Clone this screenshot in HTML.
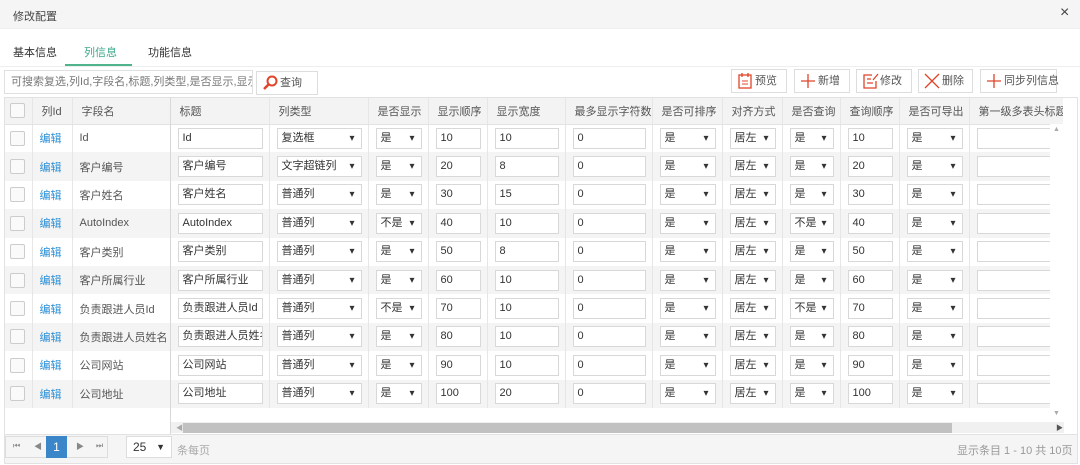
<!DOCTYPE html>
<html><head><meta charset="utf-8"><style>
*{box-sizing:border-box;margin:0;padding:0}
body{width:1080px;height:465px;overflow:hidden;background:#fff;font-family:"Liberation Sans","Noto Sans CJK SC",sans-serif;font-size:11px;color:#555;position:relative}
.abs{position:absolute;white-space:nowrap}
.title{left:0;top:0;width:1080px;height:29px;background:#f5f5f5;border-bottom:1px solid #eee}
.title span{position:absolute;left:13px;top:8px;color:#444}
.tab{top:44px;color:#333}
.btn{top:69px;height:24px;border:1px solid #ddd;background:#fff;color:#555;line-height:22px;padding-left:23px}
.btn svg{position:absolute;left:5px;top:3px}
table{border-collapse:collapse;table-layout:fixed}
td{height:28.4px;border-right:1px solid #e6e6e6;padding:0 6px 0 7px;white-space:nowrap;overflow:hidden;vertical-align:middle}
tr.h td{height:26px;background:#f3f3f3;border-bottom:1px solid #e2e2e2;color:#555;padding-left:9px}
tr:nth-child(odd):not(.h) td{background:#f4f4f4}
.in{display:block;height:21px;border:1px solid #d8d8d8;background:#fff;line-height:19px;padding-left:4px;color:#333;position:relative;overflow:hidden}
.sel:after{content:"▾";position:absolute;right:6px;top:0;font-size:10px;color:#333}
.cb{display:inline-block;width:15px;height:15px;border:1px solid #ccc;border-radius:2px;background:#fafafa;margin-left:2px;vertical-align:middle}
tr.h td:first-child{padding-left:7px}
.ed{color:#2b8fd6}
</style></head><body>
<div class="abs title"><span>修改配置</span><span style="left:1060px;top:4px;font-size:16px;color:#444">×</span></div>
<div class="abs tab" style="left:13px">基本信息</div>
<div class="abs tab" style="left:84px;color:#3ba88a">列信息</div>
<div class="abs tab" style="left:148px">功能信息</div>
<div class="abs" style="left:65px;top:64px;width:67px;height:2px;background:#4fb38c"></div>
<div class="abs" style="left:0;top:66px;width:1080px;height:1px;background:#eee"></div>
<div class="abs" style="left:4px;top:70px;width:249px;height:24px;border:1px solid #e0e0e0;color:#777;line-height:22px;padding-left:6px;overflow:hidden;white-space:nowrap;font-size:11px">可搜索复选,列Id,字段名,标题,列类型,是否显示,显示顺序,显</div>
<div class="abs btn" style="left:256px;width:62px;top:71px"><svg width="16" height="16"><circle cx="10" cy="6" r="4.5" fill="none" stroke="#e0452a" stroke-width="2"/><line x1="7" y1="9" x2="2" y2="14" stroke="#e0452a" stroke-width="2.5"/></svg>查询</div>
<div class="abs btn" style="left:731px;width:56px"><svg width="16" height="16"><rect x="2" y="2" width="12" height="13" fill="none" stroke="#e0452a" stroke-width="1.3"/><line x1="5" y1="0" x2="5" y2="4" stroke="#e0452a" stroke-width="1.3"/><line x1="11" y1="0" x2="11" y2="4" stroke="#e0452a" stroke-width="1.3"/><line x1="5" y1="8" x2="11" y2="8" stroke="#e0452a"/><line x1="5" y1="11" x2="11" y2="11" stroke="#e0452a"/></svg>预览</div>
<div class="abs btn" style="left:794px;width:56px"><svg width="16" height="16"><path d="M8 1V15M1 8H15" stroke="#e0452a" stroke-width="1.3"/></svg>新增</div>
<div class="abs btn" style="left:856px;width:56px"><svg width="18" height="16"><path d="M10 2H2V15H14V8M5 6H9M5 10H11M11 7L16 1" fill="none" stroke="#e0452a" stroke-width="1.3"/></svg>修改</div>
<div class="abs btn" style="left:918px;width:55px"><svg width="16" height="16"><path d="M1 1L15 15M15 1L1 15" stroke="#e0452a" stroke-width="1.3"/></svg>删除</div>
<div class="abs btn" style="left:980px;width:77px"><svg width="16" height="16"><path d="M8 1V15M1 8H15" stroke="#e0452a" stroke-width="1.3"/></svg>同步列信息</div>

<div class="abs" style="left:4px;top:97px;width:1074px;height:367px;border:1px solid #e2e2e2;overflow:hidden">
<table style="width:1095px;margin-left:-4px">
<colgroup><col style="width:31px"><col style="width:40px"><col style="width:98px"><col style="width:99px"><col style="width:99px"><col style="width:60px"><col style="width:59px"><col style="width:78px"><col style="width:87px"><col style="width:70px"><col style="width:60px"><col style="width:58px"><col style="width:59px"><col style="width:70px"><col style="width:127px"></colgroup>
<tr class="h"><td><span class="cb"></span></td><td>列Id</td><td>字段名</td><td>标题</td><td>列类型</td><td>是否显示</td><td>显示顺序</td><td>显示宽度</td><td>最多显示字符数</td><td>是否可排序</td><td>对齐方式</td><td>是否查询</td><td>查询顺序</td><td>是否可导出</td><td>第一级多表头标题</td></tr>
<tr><td><span class="cb"></span></td><td class="ed">编辑</td><td>Id</td><td><span class="in">Id</span></td><td><span class="in sel">复选框</span></td><td><span class="in sel">是</span></td><td><span class="in">10</span></td><td><span class="in">10</span></td><td><span class="in">0</span></td><td><span class="in sel">是</span></td><td><span class="in sel">居左</span></td><td><span class="in sel">是</span></td><td><span class="in">10</span></td><td><span class="in sel">是</span></td><td><span class="in" style="width:100px">&nbsp;</span></td></tr>
<tr><td><span class="cb"></span></td><td class="ed">编辑</td><td>客户编号</td><td><span class="in">客户编号</span></td><td><span class="in sel">文字超链列</span></td><td><span class="in sel">是</span></td><td><span class="in">20</span></td><td><span class="in">8</span></td><td><span class="in">0</span></td><td><span class="in sel">是</span></td><td><span class="in sel">居左</span></td><td><span class="in sel">是</span></td><td><span class="in">20</span></td><td><span class="in sel">是</span></td><td><span class="in" style="width:100px">&nbsp;</span></td></tr>
<tr><td><span class="cb"></span></td><td class="ed">编辑</td><td>客户姓名</td><td><span class="in">客户姓名</span></td><td><span class="in sel">普通列</span></td><td><span class="in sel">是</span></td><td><span class="in">30</span></td><td><span class="in">15</span></td><td><span class="in">0</span></td><td><span class="in sel">是</span></td><td><span class="in sel">居左</span></td><td><span class="in sel">是</span></td><td><span class="in">30</span></td><td><span class="in sel">是</span></td><td><span class="in" style="width:100px">&nbsp;</span></td></tr>
<tr><td><span class="cb"></span></td><td class="ed">编辑</td><td>AutoIndex</td><td><span class="in">AutoIndex</span></td><td><span class="in sel">普通列</span></td><td><span class="in sel">不是</span></td><td><span class="in">40</span></td><td><span class="in">10</span></td><td><span class="in">0</span></td><td><span class="in sel">是</span></td><td><span class="in sel">居左</span></td><td><span class="in sel">不是</span></td><td><span class="in">40</span></td><td><span class="in sel">是</span></td><td><span class="in" style="width:100px">&nbsp;</span></td></tr>
<tr><td><span class="cb"></span></td><td class="ed">编辑</td><td>客户类别</td><td><span class="in">客户类别</span></td><td><span class="in sel">普通列</span></td><td><span class="in sel">是</span></td><td><span class="in">50</span></td><td><span class="in">8</span></td><td><span class="in">0</span></td><td><span class="in sel">是</span></td><td><span class="in sel">居左</span></td><td><span class="in sel">是</span></td><td><span class="in">50</span></td><td><span class="in sel">是</span></td><td><span class="in" style="width:100px">&nbsp;</span></td></tr>
<tr><td><span class="cb"></span></td><td class="ed">编辑</td><td>客户所属行业</td><td><span class="in">客户所属行业</span></td><td><span class="in sel">普通列</span></td><td><span class="in sel">是</span></td><td><span class="in">60</span></td><td><span class="in">10</span></td><td><span class="in">0</span></td><td><span class="in sel">是</span></td><td><span class="in sel">居左</span></td><td><span class="in sel">是</span></td><td><span class="in">60</span></td><td><span class="in sel">是</span></td><td><span class="in" style="width:100px">&nbsp;</span></td></tr>
<tr><td><span class="cb"></span></td><td class="ed">编辑</td><td>负责跟进人员Id</td><td><span class="in">负责跟进人员Id</span></td><td><span class="in sel">普通列</span></td><td><span class="in sel">不是</span></td><td><span class="in">70</span></td><td><span class="in">10</span></td><td><span class="in">0</span></td><td><span class="in sel">是</span></td><td><span class="in sel">居左</span></td><td><span class="in sel">不是</span></td><td><span class="in">70</span></td><td><span class="in sel">是</span></td><td><span class="in" style="width:100px">&nbsp;</span></td></tr>
<tr><td><span class="cb"></span></td><td class="ed">编辑</td><td>负责跟进人员姓名</td><td><span class="in">负责跟进人员姓名</span></td><td><span class="in sel">普通列</span></td><td><span class="in sel">是</span></td><td><span class="in">80</span></td><td><span class="in">10</span></td><td><span class="in">0</span></td><td><span class="in sel">是</span></td><td><span class="in sel">居左</span></td><td><span class="in sel">是</span></td><td><span class="in">80</span></td><td><span class="in sel">是</span></td><td><span class="in" style="width:100px">&nbsp;</span></td></tr>
<tr><td><span class="cb"></span></td><td class="ed">编辑</td><td>公司网站</td><td><span class="in">公司网站</span></td><td><span class="in sel">普通列</span></td><td><span class="in sel">是</span></td><td><span class="in">90</span></td><td><span class="in">10</span></td><td><span class="in">0</span></td><td><span class="in sel">是</span></td><td><span class="in sel">居左</span></td><td><span class="in sel">是</span></td><td><span class="in">90</span></td><td><span class="in sel">是</span></td><td><span class="in" style="width:100px">&nbsp;</span></td></tr>
<tr><td><span class="cb"></span></td><td class="ed">编辑</td><td>公司地址</td><td><span class="in">公司地址</span></td><td><span class="in sel">普通列</span></td><td><span class="in sel">是</span></td><td><span class="in">100</span></td><td><span class="in">20</span></td><td><span class="in">0</span></td><td><span class="in sel">是</span></td><td><span class="in sel">居左</span></td><td><span class="in sel">是</span></td><td><span class="in">100</span></td><td><span class="in sel">是</span></td><td><span class="in" style="width:100px">&nbsp;</span></td></tr>
</table>
</div>
<div class="abs" style="left:170px;top:97px;width:1px;height:337px;background:#d8d8d8"></div>
<div class="abs" style="left:1050px;top:124px;width:13px;height:298px;background:#fff"></div>
<div class="abs" style="left:1063px;top:98px;width:14px;height:336px;background:#fff"></div>
<div class="abs" style="left:1053px;top:126px;font-size:7px;color:#aaa">▲</div>
<div class="abs" style="left:1053px;top:410px;font-size:7px;color:#aaa">▼</div>
<div class="abs" style="left:171px;top:422px;width:893px;height:11px;background:#f0f0f0"></div>
<div class="abs" style="left:176px;top:423px;font-size:7px;color:#aaa">◀</div>
<div class="abs" style="left:183px;top:423px;width:769px;height:10px;background:#c1c1c1"></div>
<div class="abs" style="left:1056px;top:423px;font-size:7px;color:#555">▶</div>
<div class="abs" style="left:5px;top:434px;width:1072px;height:29px;background:#f5f5f5;border-top:1px solid #e2e2e2"></div>
<div class="abs" style="left:5px;top:436px;width:103px;height:22px;border:1px solid #ddd;background:#f5f5f5"></div>
<div class="abs" style="left:13px;top:441px;font-size:8px;color:#888">⏮</div>
<div class="abs" style="left:34px;top:441px;font-size:8px;color:#888">◀</div>
<div class="abs" style="left:46px;top:436px;width:21px;height:22px;background:#3a86c8;color:#fff;text-align:center;line-height:22px;font-size:12px">1</div>
<div class="abs" style="left:76px;top:441px;font-size:8px;color:#888">▶</div>
<div class="abs" style="left:96px;top:441px;font-size:8px;color:#888">⏭</div>
<div class="abs" style="left:126px;top:436px;width:46px;height:22px;border:1px solid #ddd;background:#fff;line-height:20px;padding-left:6px;color:#333;font-size:12px">25<span style="position:absolute;right:6px;font-size:9px">▼</span></div>
<div class="abs" style="left:177px;top:442px;color:#aaa">条每页</div>
<div class="abs" style="left:957px;top:442px;color:#999">显示条目 1 - 10 共 10页</div>
</body></html>
